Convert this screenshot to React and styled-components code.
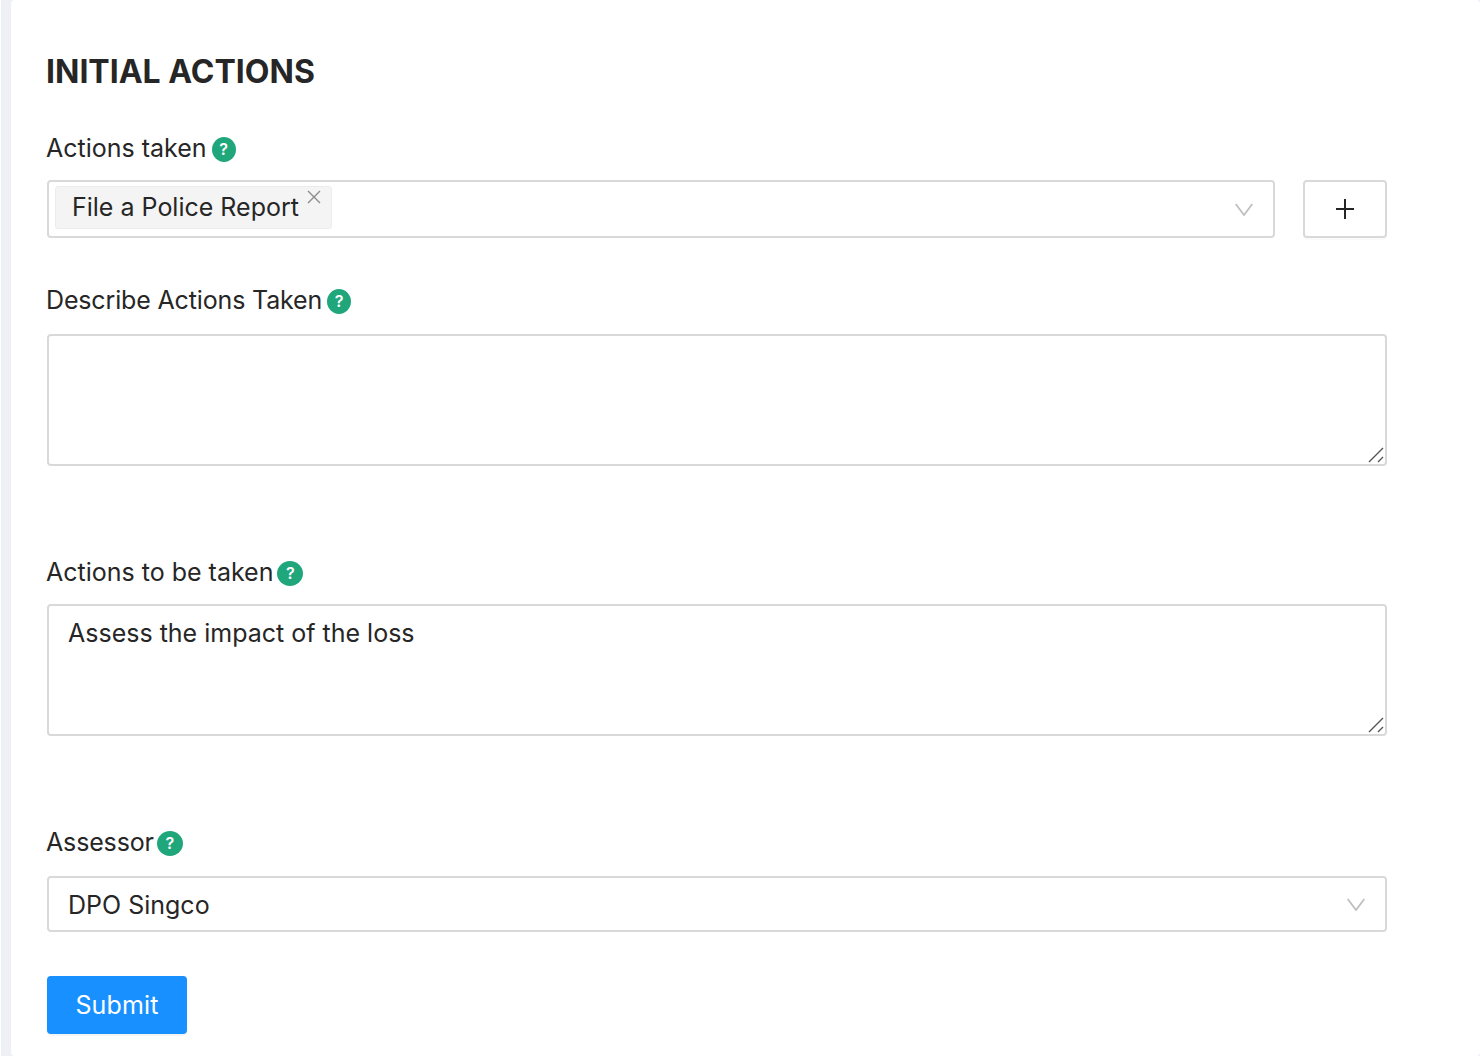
import React from 'react';
import styled, { createGlobalStyle } from 'styled-components';

const Global = createGlobalStyle`
  html, body {
    margin: 0;
    background: #fff;
  }
  * { box-sizing: border-box; }
`;

const Page = styled.div`
  width: 1480px;
  height: 1056px;
  overflow: hidden;
  padding-left: 1px;
  background: #fff;
  font-family: Inter, 'Noto Sans', sans-serif;
  color: #262626;
`;

const Backdrop = styled.div`
  height: 100%;
  background: #eef0f5;
`;

const Card = styled.div`
  margin-left: 10px;
  height: 100%;
  background: #fff;
  border-radius: 4px;
  padding: 52px 93px 0 36px;
`;

const Heading = styled.h2`
  margin: 0 0 41px -1px;
  font-size: 32px;
  line-height: 40px;
  font-weight: 700;
  color: #262626;
`;

const Field = styled.div`
  margin-bottom: ${(p) => p.$gap}px;
`;

const Label = styled.div`
  display: flex;
  align-items: center;
  gap: ${(p) => p.$iconGap}px;
  height: 30px;
  margin-left: -1px;
  margin-bottom: ${(p) => p.$gap || 17}px;
  font-size: 25px;
  line-height: 30px;
  letter-spacing: ${(p) => p.$tracking || 0}px;
`;

const Help = styled.span`
  display: flex;
  align-items: center;
  justify-content: center;
  width: ${(p) => p.$width || 24}px;
  height: 25px;
  margin-top: 2px;
  border-radius: 50%;
  background: #1fa67a;
  color: #fff;
  font-size: 16px;
  font-weight: 600;
  line-height: 1;
  letter-spacing: 0;
`;

const Row = styled.div`
  display: flex;
  gap: 28px;
`;

const Select = styled.div`
  flex: 1;
  display: flex;
  align-items: center;
  justify-content: space-between;
  height: ${(p) => p.$height}px;
  padding: ${(p) => (p.$multi ? '0 20px 0 6px' : '1px 20px 0 19px')};
  background: #fff;
  border: 2px solid #d9d9d9;
  border-radius: 4px;
  font-size: 25px;
`;

const Tag = styled.div`
  display: flex;
  align-items: flex-start;
  height: 43px;
  margin-top: -3px;
  padding: 0 10px 0 16px;
  background: #f4f4f4;
  border: 1px solid #ececec;
  border-radius: 3px;
  line-height: 40px;
`;

const TagClose = styled.svg`
  width: 14px;
  height: 14px;
  margin: 3px 0 0 8px;
  color: #8c8c8c;
`;

const AddButton = styled.button`
  display: flex;
  align-items: center;
  justify-content: center;
  width: 84px;
  height: 58px;
  padding: 0;
  background: #fff;
  border: 2px solid #d9d9d9;
  border-radius: 4px;
  box-shadow: 0 2px 0 rgba(0, 0, 0, 0.02);
  color: #262626;
`;

const AreaWrap = styled.div`
  position: relative;
`;

const TextArea = styled.textarea`
  display: block;
  width: 100%;
  height: 132px;
  padding: 11px 19px;
  background: #fff;
  border: 2px solid #d9d9d9;
  border-radius: 4px;
  outline: none;
  resize: none;
  font-family: inherit;
  font-size: 25px;
  line-height: 32px;
  color: #262626;
`;

const Grip = styled.svg`
  position: absolute;
  right: 2px;
  bottom: 2px;
  width: 17px;
  height: 17px;
  pointer-events: none;
`;

const Submit = styled.button`
  display: block;
  width: 140px;
  height: 58px;
  padding: 0;
  background: #1890ff;
  border: none;
  border-radius: 4px;
  box-shadow: 0 2px 0 rgba(0, 0, 0, 0.045);
  font-family: inherit;
  font-size: 25px;
  letter-spacing: 0.15px;
  color: #fff;
`;

const Chevron = () => (
  <svg width="18" height="13" viewBox="0 0 18 13" fill="none" stroke="#bfbfbf" strokeWidth="1.8">
    <path d="M.7 1L9 12l8.3-11" />
  </svg>
);

const ResizeGrip = () => (
  <Grip viewBox="0 0 17 17" fill="none" stroke="#555" strokeWidth="1.4">
    <path d="M1 15L15 1M10 15l5-5" />
  </Grip>
);

function App() {
  return (
    <Page>
      <Global />
      <Backdrop>
        <Card>
          <Heading>INITIAL ACTIONS</Heading>

          <Field $gap={47}>
            <Label $iconGap={5}>
              Actions taken <Help>?</Help>
            </Label>
            <Row>
              <Select $height={58} $multi>
                <Tag>
                  File a Police Report
                  <TagClose viewBox="0 0 14 14" fill="none" stroke="currentColor" strokeWidth="1.4">
                    <path d="M1 1l12 12M13 1L1 13" />
                  </TagClose>
                </Tag>
                <Chevron />
              </Select>
              <AddButton aria-label="Add">
                <svg width="18" height="20" viewBox="0 0 18 20" fill="none" stroke="currentColor" strokeWidth="2">
                  <path d="M9 0v20M0 10h18" />
                </svg>
              </AddButton>
            </Row>
          </Field>

          <Field $gap={91}>
            <Label $gap={19} $iconGap={5} $tracking={-0.15}>
              Describe Actions Taken <Help>?</Help>
            </Label>
            <AreaWrap>
              <TextArea />
              <ResizeGrip />
            </AreaWrap>
          </Field>

          <Field $gap={91}>
            <Label $iconGap={4}>
              Actions to be taken <Help $width={26}>?</Help>
            </Label>
            <AreaWrap>
              <TextArea defaultValue="Assess the impact of the loss" />
              <ResizeGrip />
            </AreaWrap>
          </Field>

          <Field $gap={44}>
            <Label $gap={19} $iconGap={3} $tracking={-0.15}>
              Assessor <Help $width={26}>?</Help>
            </Label>
            <Select $height={56}>
              DPO Singco
              <Chevron />
            </Select>
          </Field>

          <Submit>Submit</Submit>
        </Card>
      </Backdrop>
    </Page>
  );
}

export default App;
